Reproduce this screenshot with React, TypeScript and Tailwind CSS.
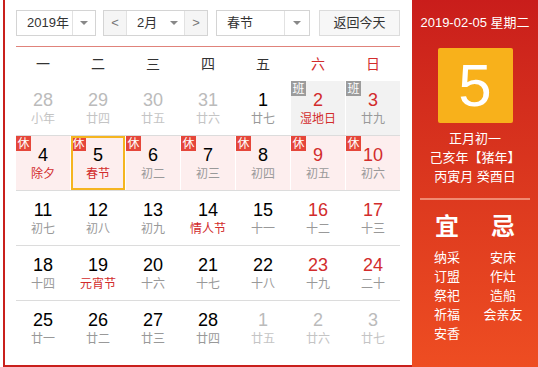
type Day = {
  n: number;
  lunar: string;
  other?: boolean;
  red?: boolean;
  fest?: boolean;
  badge?: "休" | "班";
  today?: boolean;
};

const weeks: Day[][] = [
  [
    { n: 28, lunar: "小年", other: true },
    { n: 29, lunar: "廿四", other: true },
    { n: 30, lunar: "廿五", other: true },
    { n: 31, lunar: "廿六", other: true },
    { n: 1, lunar: "廿七" },
    { n: 2, lunar: "湿地日", red: true, fest: true, badge: "班" },
    { n: 3, lunar: "廿九", red: true, badge: "班" },
  ],
  [
    { n: 4, lunar: "除夕", fest: true, badge: "休" },
    { n: 5, lunar: "春节", fest: true, badge: "休", today: true },
    { n: 6, lunar: "初二", badge: "休" },
    { n: 7, lunar: "初三", badge: "休" },
    { n: 8, lunar: "初四", badge: "休" },
    { n: 9, lunar: "初五", red: true, badge: "休" },
    { n: 10, lunar: "初六", red: true, badge: "休" },
  ],
  [
    { n: 11, lunar: "初七" },
    { n: 12, lunar: "初八" },
    { n: 13, lunar: "初九" },
    { n: 14, lunar: "情人节", fest: true },
    { n: 15, lunar: "十一" },
    { n: 16, lunar: "十二", red: true },
    { n: 17, lunar: "十三", red: true },
  ],
  [
    { n: 18, lunar: "十四" },
    { n: 19, lunar: "元宵节", fest: true },
    { n: 20, lunar: "十六" },
    { n: 21, lunar: "十七" },
    { n: 22, lunar: "十八" },
    { n: 23, lunar: "十九", red: true },
    { n: 24, lunar: "二十", red: true },
  ],
  [
    { n: 25, lunar: "廿一" },
    { n: 26, lunar: "廿二" },
    { n: 27, lunar: "廿三" },
    { n: 28, lunar: "廿四" },
    { n: 1, lunar: "廿五", other: true },
    { n: 2, lunar: "廿六", other: true },
    { n: 3, lunar: "廿七", other: true },
  ],
];

const weekdays = ["一", "二", "三", "四", "五", "六", "日"];

function Caret() {
  return (
    <span className="h-0 w-0 border-x-[4px] border-t-[4px] border-x-transparent border-t-[#888]" />
  );
}

function Cell({ d }: { d: Day }) {
  const bg =
    d.badge === "休" ? "bg-[#fdeeee]" : d.badge === "班" ? "bg-[#f2f2f2]" : "bg-white";
  const numColor = d.other ? "text-[#bbb]" : d.red ? "text-[#d22c2c]" : "text-black";
  const lunarColor = d.other ? "text-[#c4c4c4]" : d.fest ? "text-[#d22c2c]" : "text-[#999]";
  return (
    <div className={`relative flex h-[54px] flex-col items-center pt-[8px] ${bg}`}>
      {d.badge && (
        <span
          className={`absolute left-0 top-0 flex h-[15px] w-[15px] items-center justify-center text-[12px] leading-none text-white ${
            d.badge === "休" ? "bg-[#e5463a]" : "bg-[#9c9c9c]"
          }`}
        >
          {d.badge}
        </span>
      )}
      {d.today && (
        <span className="pointer-events-none absolute inset-0 border-2 border-[#f5b520]" />
      )}
      <span className={`text-[18px] leading-[22px] ${numColor}`}>{d.n}</span>
      <span className={`text-[12px] leading-[16px] ${lunarColor}`}>{d.lunar}</span>
    </div>
  );
}

export default function App() {
  return (
    <div
      className="flex h-[367px] w-[538px] bg-white pl-[3px]"
      style={{ fontFamily: '"Liberation Sans", Arial, "Noto Sans CJK SC", sans-serif' }}
    >
      <div className="flex w-[409px] flex-col border-b-2 border-l-2 border-[#c9201c] pl-[11px] pt-[10px]">
        {/* controls */}
        <div className="flex h-[26px] w-[384px] items-stretch text-[13px] text-[#333]">
          <div className="flex w-[80px] border border-[#d4d4d4]">
            <span className="flex flex-1 items-center pl-[10px]">2019年</span>
            <span className="flex w-[23px] items-center justify-center border-l border-[#e2e2e2]">
              <Caret />
            </span>
          </div>
          <div className="ml-[7px] flex w-[105px] border border-[#d4d4d4]">
            <span className="flex w-[23px] items-center justify-center border-r border-[#e2e2e2] bg-[#f5f5f5] text-[#777]">
              &lt;
            </span>
            <span className="flex flex-1 items-center pl-[10px]">2月</span>
            <span className="flex w-[14px] items-center">
              <Caret />
            </span>
            <span className="flex w-[23px] items-center justify-center border-l border-[#e2e2e2] bg-[#f5f5f5] text-[#777]">
              &gt;
            </span>
          </div>
          <div className="ml-[8px] flex w-[94px] border border-[#d4d4d4]">
            <span className="flex flex-1 items-center pl-[10px]">春节</span>
            <span className="flex w-[25px] items-center justify-center border-l border-[#e2e2e2]">
              <Caret />
            </span>
          </div>
          <div className="ml-[9px] flex w-[81px] items-center justify-center border border-[#dcdcdc] bg-[#f7f7f7]">
            返回今天
          </div>
        </div>

        <div className="mt-[10px] h-px w-[384px] bg-[#e0837b]" />

        {/* weekdays */}
        <div className="grid h-[34px] w-[384px] grid-cols-7 gap-x-px">
          {weekdays.map((w, i) => (
            <div
              key={w}
              className={`flex items-center justify-center text-[14px] ${
                i >= 5 ? "text-[#d22c2c]" : "text-[#333]"
              }`}
            >
              {w}
            </div>
          ))}
        </div>

        {/* days */}
        <div className="flex w-[384px] flex-col">
          {weeks.map((row, ri) => (
            <div
              key={ri}
              className={`grid grid-cols-7 gap-x-px ${ri < weeks.length - 1 ? "border-b border-[#dcdcdc]" : ""}`}
            >
              {row.map((d, i) => (
                <Cell key={i} d={d} />
              ))}
            </div>
          ))}
        </div>
      </div>

      {/* side panel */}
      <div className="flex w-[126px] flex-col items-center bg-gradient-to-b from-[#c91d1b] to-[#ee4d22] text-white">
        <div className="mt-[14px] text-[13px] leading-[17px]">2019-02-05 星期二</div>
        <div className="mt-[17px] flex h-[75px] w-[75px] items-center justify-center rounded-[2px] bg-[#f8b11b] text-[60px] leading-none">
          5
        </div>
        <div className="mt-[6px] flex flex-col items-center text-[13px] leading-[19px]">
          <span>正月初一</span>
          <span>己亥年【猪年】</span>
          <span>丙寅月 癸酉日</span>
        </div>
        <div className="mt-[12px] h-[2px] w-[110px] bg-[#f08a72]" />
        <div className="mt-[13px] grid w-[112px] grid-cols-2 text-center">
          <div className="flex flex-col items-center">
            <span className="mb-[7px] text-[24px] font-bold leading-[28px]">宜</span>
            {["纳采", "订盟", "祭祀", "祈福", "安香"].map((t) => (
              <span key={t} className="text-[13px] leading-[19px]">
                {t}
              </span>
            ))}
          </div>
          <div className="flex flex-col items-center">
            <span className="mb-[7px] text-[24px] font-bold leading-[28px]">忌</span>
            {["安床", "作灶", "造船", "会亲友"].map((t) => (
              <span key={t} className="text-[13px] leading-[19px]">
                {t}
              </span>
            ))}
          </div>
        </div>
      </div>
    </div>
  );
}
